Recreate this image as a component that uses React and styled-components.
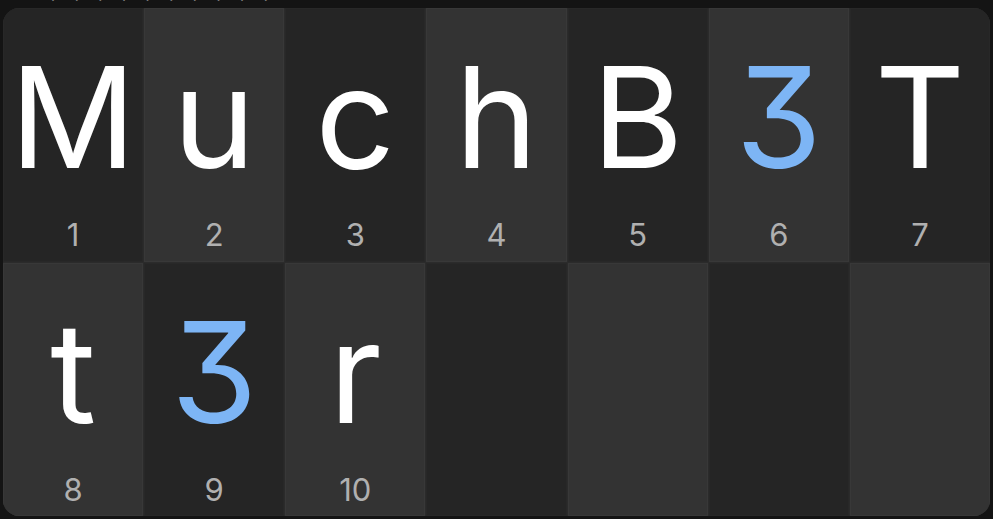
import React from "react";
import styled, { createGlobalStyle } from "styled-components";

const Global = createGlobalStyle`
  html, body { margin: 0; padding: 0; background: #141414; }
  body { font-family: Inter, "Noto Sans", sans-serif; }
`;

const Page = styled.div`
  position: relative;
  padding: 8px 3px 3px 3px;
  height: 519px;
  box-sizing: border-box;
  overflow: hidden;
`;

const Dots = styled.div`
  position: absolute;
  top: -6px;
  left: 51px;
  color: #8a8a8a;
  font-size: 14px;
  letter-spacing: 19.6px;
  white-space: nowrap;
  line-height: 12px;
`;

const Board = styled.div`
  display: grid;
  grid-template-columns: repeat(7, 1fr);
  grid-template-rows: repeat(2, 1fr);
  gap: 1px;
  height: 100%;
  background: #2b2b2b;
  border-radius: 16px;
  overflow: hidden;
`;

const Cell = styled.div`
  display: flex;
  flex-direction: column;
  align-items: center;
  background: ${(p) => (p.$light ? "#333333" : "#252525")};
  box-shadow: inset 0 0 0 1px ${(p) => (p.$light ? "#383838" : "#282828")};
`;

const Glyph = styled.div`
  height: 179px;
  display: flex;
  align-items: flex-end;
  font-size: 140px;
  line-height: 1;
  font-weight: 400;
  font-feature-settings: "cv09" 1;
  color: ${(p) => (p.$accent ? "#7db5f5" : "#ffffff")};
`;

const Num = styled.div`
  margin-top: 32px;
  font-size: 31px;
  color: #b0b0b0;
  line-height: 1;
`;

const letters = ["M", "u", "c", "h", "B", "3", "T", "t", "3", "r"];

export default function App() {
  const cells = Array.from({ length: 14 }, (_, i) => i);
  return (
    <>
      <Global />
      <Page>
        <Dots>··········</Dots>
        <Board>
          {cells.map((i) => {
            const r = Math.floor(i / 7);
            const c = i % 7;
            const ch = letters[i];
            return (
              <Cell key={i} $light={(r + c) % 2 === 1}>
                {ch !== undefined && (
                  <>
                    <Glyph $accent={ch === "3"}>{ch}</Glyph>
                    <Num>{i + 1}</Num>
                  </>
                )}
              </Cell>
            );
          })}
        </Board>
      </Page>
    </>
  );
}
